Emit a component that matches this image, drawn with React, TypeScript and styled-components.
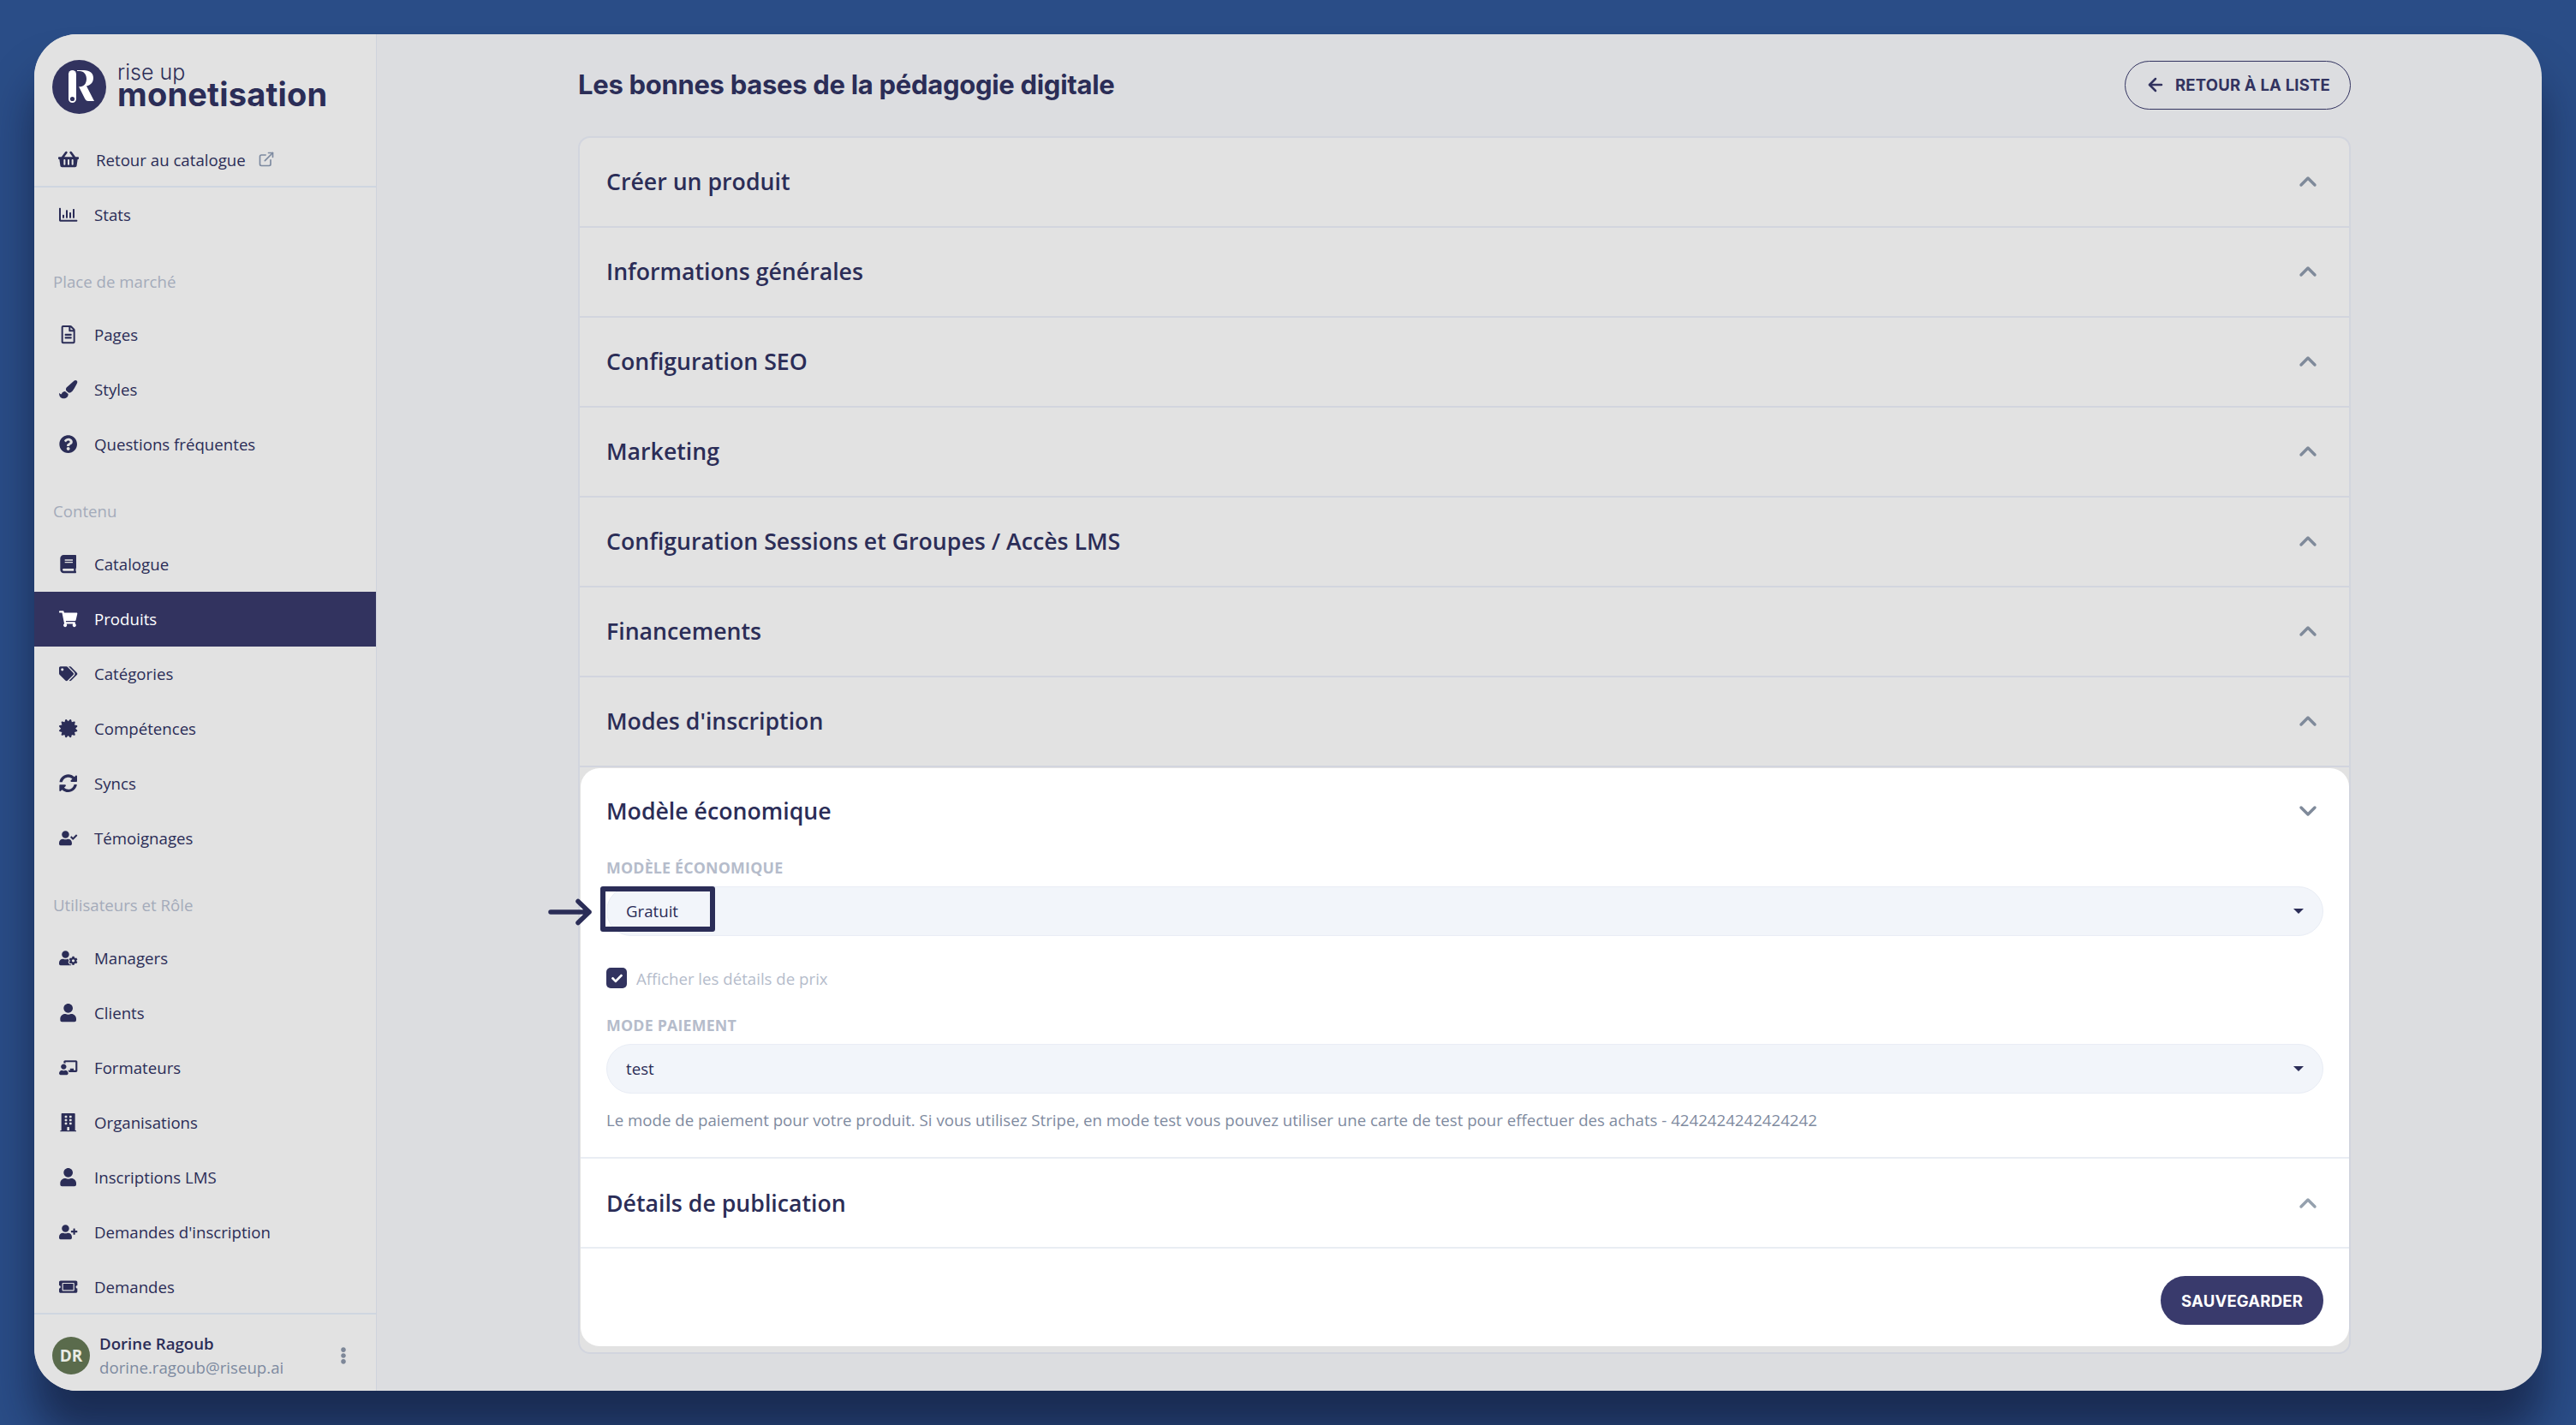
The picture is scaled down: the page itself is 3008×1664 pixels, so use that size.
import React from "react";
import styled, { createGlobalStyle } from "styled-components";
import {
  FaShoppingBasket, FaRegChartBar, FaRegFileAlt, FaPaintBrush, FaQuestionCircle, FaBook,
  FaShoppingCart, FaTags, FaCertificate, FaSyncAlt, FaUserCheck, FaUserCog, FaUser,
  FaChalkboardTeacher, FaBuilding, FaUserPlus, FaTicketAlt, FaEllipsisV, FaCheck,
} from "react-icons/fa";
import { ChevronUp, ChevronDown, ExternalLink, ArrowLeft } from "lucide-react";

const INK = "#2b2d57";
const OPEN = `"Open Sans", "Liberation Sans", sans-serif`;
const INTER = `Inter, "Liberation Sans", sans-serif`;

const Global = createGlobalStyle`
  html, body { margin: 0; padding: 0; width: 3008px; height: 1664px; overflow: hidden; }
  * { box-sizing: border-box; }
  body { font-family: ${OPEN}; }
`;

const Backdrop = styled.div`
  width: 3008px; height: 1664px; padding: 40px; background: #2a4d87;
`;
const Panel = styled.div`
  width: 2928px; height: 1584px; display: flex; border-radius: 50px; overflow: hidden;
  background: #dcdde0; box-shadow: 0 50px 50px rgba(12, 16, 40, 0.55);
`;
const Sidebar = styled.aside`
  width: 399px; flex: none; display: flex; flex-direction: column; background: #e2e2e2;
  box-shadow: 1px 0 0 #cfd3dc;
`;
const LogoRow = styled.div`
  height: 115px; flex: none; display: flex; align-items: flex-start; gap: 13px; padding: 30px 0 0 21px;
`;
const LogoText = styled.div`
  display: flex; flex-direction: column; color: ${INK};
`;
const LogoLight = styled.span`
  font: 300 25px/28px ${INTER}; height: 22px;
`;
const LogoBold = styled.span`
  font: 700 38px/36px ${INTER}; letter-spacing: 0.2px;
`;
const BackRow = styled.div`
  height: 64px; flex: none; display: flex; align-items: center; padding: 0 0 0 28px; gap: 20px;
  border-bottom: 2px solid #cfd6e0; color: ${INK}; font-size: 18.67px;
`;
const ExtIcon = styled(ExternalLink)`
  color: #7d8aa0; margin-left: -6px;
`;
const Nav = styled.nav`
  flex: 1; min-height: 0; overflow: hidden; display: flex; flex-direction: column;
`;
const NavLabel = styled.div`
  height: 28px; margin: 32px 0 16px; padding-left: 22px; flex: none;
  font: 400 18.67px/28px ${OPEN}; color: #a4abba;
`;
const NavRow = styled.div<{ $active?: boolean }>`
  height: 64px; flex: none; display: flex; align-items: center; padding-left: 25px;
  font: 400 18.67px/28px ${OPEN};
  background: ${p => (p.$active ? "#32335f" : "transparent")};
  color: ${p => (p.$active ? "#fff" : INK)};
`;
const NavIcon = styled.span`
  width: 30px; margin-right: 15px; display: flex; justify-content: center; flex: none;
  svg { height: 21.33px; width: auto; flex: none; }
`;
const UserRow = styled.div`
  height: 91px; flex: none; border-top: 2px solid #cfd6e0; display: flex; align-items: center;
  padding: 6px 0 0 21px; gap: 11px;
`;
const Avatar = styled.div`
  width: 44px; height: 44px; border-radius: 50%; background: #5a6b4c; color: #e8ece4; flex: none;
  display: flex; align-items: center; justify-content: center; font: 700 19px ${OPEN};
`;
const UserText = styled.div`
  flex: 1; display: flex; flex-direction: column; gap: 2px;
`;
const UserName = styled.div`
  font: 600 18.67px/26px ${OPEN}; color: ${INK};
`;
const UserMail = styled.div`
  font: 400 18.67px/26px ${OPEN}; color: #7d8aa0;
`;
const Dots = styled.div`
  color: #7d8798; font-size: 20px; display: flex; margin-right: 28px;
`;
const Main = styled.main`
  flex: 1; min-width: 0; padding: 31px 223px 0 236px; display: flex; flex-direction: column;
`;
const TopBar = styled.div`
  height: 56px; display: flex; align-items: center; justify-content: space-between; margin-bottom: 32px;
`;
const Title = styled.h1`
  margin: 0; font: 700 31px/56px ${INTER}; color: ${INK}; letter-spacing: -0.3px;
`;
const OutlineButton = styled.button`
  width: 264px; height: 57px; border: 1.5px solid #32335f; border-radius: 29px; background: transparent;
  display: flex; align-items: center; justify-content: center; gap: 11px; color: #32335f; padding: 0;
  font: 700 18.5px ${INTER}; letter-spacing: 0.2px;
`;
const Accordion = styled.div`
  border: 2px solid #d2d5de; border-radius: 14px; background: #e2e2e2; height: 1422px;
  display: flex; flex-direction: column;
`;
const Row = styled.div<{ $light?: boolean }>`
  height: 105px; flex: none; display: flex; align-items: center; justify-content: space-between;
  padding: ${p => (p.$light ? "0 32px 0 30px" : "0 32px 2px 31px")};
  font: 600 26.7px/36px ${OPEN}; color: ${INK};
  border-bottom: 2px solid ${p => (p.$light ? "#e9edf3" : "#d2d5de")};
`;
const Chevron = styled(ChevronUp)<{ $dark?: boolean }>`
  color: ${p => (p.$dark ? "#7f8a9a" : "#95a1ae")};
`;
const Card = styled.section`
  margin: 1px 0 7px 1px; background: #fff; border-radius: 22px; height: 676px;
  display: flex; flex-direction: column;
`;
const CardHead = styled.div`
  height: 103px; flex: none; display: flex; align-items: center; justify-content: space-between;
  padding: 0 32px 4px 30px; font: 600 26.7px/36px ${OPEN}; color: ${INK};
`;
const CardForm = styled.div`
  padding: 0 30px 0 30px; height: 353px; flex: none; border-bottom: 2px solid #e9edf3;
  display: flex; flex-direction: column;
`;
const FieldLabel = styled.div<{ $spaced?: boolean }>`
  font: 700 17.8px/26px ${OPEN}; color: #b5bccb; letter-spacing: 0.2px; flex: none;
  margin-top: ${p => (p.$spaced ? "30px" : "0")};
`;
const SelectBox = styled.div`
  height: 58px; margin-top: 9px; flex: none; border: 1px solid #e9edf5; border-radius: 29px; background: #f2f5fa;
  display: flex; align-items: center; justify-content: space-between; padding: 0 22px 1px; position: relative;
  font: 400 18.67px ${OPEN}; color: ${INK};
`;
const Caret = styled.span`
  width: 0; height: 0; border-left: 6px solid transparent; border-right: 6px solid transparent;
  border-top: 6px solid ${INK};
`;
const Highlight = styled.div`
  position: absolute; left: -8px; top: -1px; width: 134px; height: 53px; border: 6px solid ${INK}; border-radius: 3px;
`;
const ArrowMark = styled.svg`
  position: absolute; left: -69px; top: 13px;
`;
const CheckRow = styled.div`
  display: flex; align-items: center; gap: 11px; margin-top: 37px; height: 24px; flex: none;
  font: 400 18.67px ${OPEN}; color: #b5bccb;
`;
const CheckBox = styled.div`
  width: 24px; height: 24px; border-radius: 5px; background: #32335f; color: #fff;
  display: flex; align-items: center; justify-content: center; font-size: 13px;
`;
const Help = styled.div`
  font: 400 18.67px/26px ${OPEN}; color: #7f8ba0; margin-top: 18px;
`;
const SaveBar = styled.div`
  flex: 1; display: flex; justify-content: flex-end; align-items: flex-start; padding: 32px 30px 0 0;
`;
const SaveButton = styled.button`
  width: 190px; height: 57px; border: 0; border-radius: 29px; background: #393a6c; color: #fff;
  font: 700 18.5px ${INTER}; letter-spacing: 0.2px; padding: 0;
`;

const LogoMark = () => (
  <svg width="63" height="63" viewBox="0 0 63 63" style={{ flex: "none" }}>
    <circle cx="31.5" cy="31.5" r="31.5" fill="#32335f" />
    <rect x="19" y="12" width="9" height="38" rx="4.5" fill="#fff" />
    <circle cx="23.5" cy="45.5" r="2.6" fill="#32335f" />
    <path d="M29 12h8c7 0 11 3.5 11 9 0 5-3 8.5-8 9.5L49 48h-7c-2 0-3-1-4-3l-7-14c5 1 9-2.5 9-9 0-5-3-9-8-9h-3z" fill="#fff" />
  </svg>
);

type Item = { label: string; Icon: React.ComponentType<{ size?: number }>; active?: boolean };

const group1: Item[] = [
  { label: "Pages", Icon: FaRegFileAlt },
  { label: "Styles", Icon: FaPaintBrush },
  { label: "Questions fréquentes", Icon: FaQuestionCircle },
];
const group2: Item[] = [
  { label: "Catalogue", Icon: FaBook },
  { label: "Produits", Icon: FaShoppingCart, active: true },
  { label: "Catégories", Icon: FaTags },
  { label: "Compétences", Icon: FaCertificate },
  { label: "Syncs", Icon: FaSyncAlt },
  { label: "Témoignages", Icon: FaUserCheck },
];
const group3: Item[] = [
  { label: "Managers", Icon: FaUserCog },
  { label: "Clients", Icon: FaUser },
  { label: "Formateurs", Icon: FaChalkboardTeacher },
  { label: "Organisations", Icon: FaBuilding },
  { label: "Inscriptions LMS", Icon: FaUser },
  { label: "Demandes d'inscription", Icon: FaUserPlus },
  { label: "Demandes", Icon: FaTicketAlt },
];

const NavItem = ({ item }: { item: Item }) => (
  <NavRow $active={item.active}>
    <NavIcon><item.Icon /></NavIcon>
    {item.label}
  </NavRow>
);

const rows = [
  "Créer un produit", "Informations générales", "Configuration SEO", "Marketing",
  "Configuration Sessions et Groupes / Accès LMS", "Financements", "Modes d'inscription",
];

export default function App() {
  return (
    <Backdrop>
      <Global />
      <Panel>
        <Sidebar>
          <LogoRow>
            <LogoMark />
            <LogoText>
              <LogoLight>rise up</LogoLight>
              <LogoBold>monetisation</LogoBold>
            </LogoText>
          </LogoRow>
          <BackRow>
            <FaShoppingBasket size={24} />
            <span>Retour au catalogue</span>
            <ExtIcon size={20} />
          </BackRow>
          <Nav>
            <NavItem item={{ label: "Stats", Icon: FaRegChartBar }} />
            <NavLabel>Place de marché</NavLabel>
            {group1.map(i => <NavItem key={i.label} item={i} />)}
            <NavLabel>Contenu</NavLabel>
            {group2.map(i => <NavItem key={i.label} item={i} />)}
            <NavLabel>Utilisateurs et Rôle</NavLabel>
            {group3.map(i => <NavItem key={i.label} item={i} />)}
          </Nav>
          <UserRow>
            <Avatar>DR</Avatar>
            <UserText>
              <UserName>Dorine Ragoub</UserName>
              <UserMail>dorine.ragoub@riseup.ai</UserMail>
            </UserText>
            <Dots><FaEllipsisV /></Dots>
          </UserRow>
        </Sidebar>
        <Main>
          <TopBar>
            <Title>Les bonnes bases de la pédagogie digitale</Title>
            <OutlineButton><ArrowLeft size={24} strokeWidth={2.5} />RETOUR À LA LISTE</OutlineButton>
          </TopBar>
          <Accordion>
            {rows.map(r => (
              <Row key={r}>
                {r}
                <Chevron $dark size={32} strokeWidth={2.6} />
              </Row>
            ))}
            <Card>
              <CardHead>
                Modèle économique
                <ChevronDown size={32} strokeWidth={2.6} color="#7f8a9a" />
              </CardHead>
              <CardForm>
                <FieldLabel>MODÈLE ÉCONOMIQUE</FieldLabel>
                <SelectBox>
                  Gratuit
                  <Caret />
                  <Highlight />
                  <ArrowMark width="52" height="32" viewBox="0 0 52 32">
                    <path d="M3 16h45M35 3.5l13 12.5-13 12.5" fill="none" stroke={INK} strokeWidth="5.5" strokeLinecap="round" strokeLinejoin="round" />
                  </ArrowMark>
                </SelectBox>
                <CheckRow>
                  <CheckBox><FaCheck /></CheckBox>
                  Afficher les détails de prix
                </CheckRow>
                <FieldLabel $spaced>MODE PAIEMENT</FieldLabel>
                <SelectBox>
                  test
                  <Caret />
                </SelectBox>
                <Help>Le mode de paiement pour votre produit. Si vous utilisez Stripe, en mode test vous pouvez utiliser une carte de test pour effectuer des achats - 4242424242424242</Help>
              </CardForm>
              <Row $light>
                Détails de publication
                <Chevron size={32} strokeWidth={2.6} />
              </Row>
              <SaveBar><SaveButton>SAUVEGARDER</SaveButton></SaveBar>
            </Card>
          </Accordion>
        </Main>
      </Panel>
    </Backdrop>
  );
}
